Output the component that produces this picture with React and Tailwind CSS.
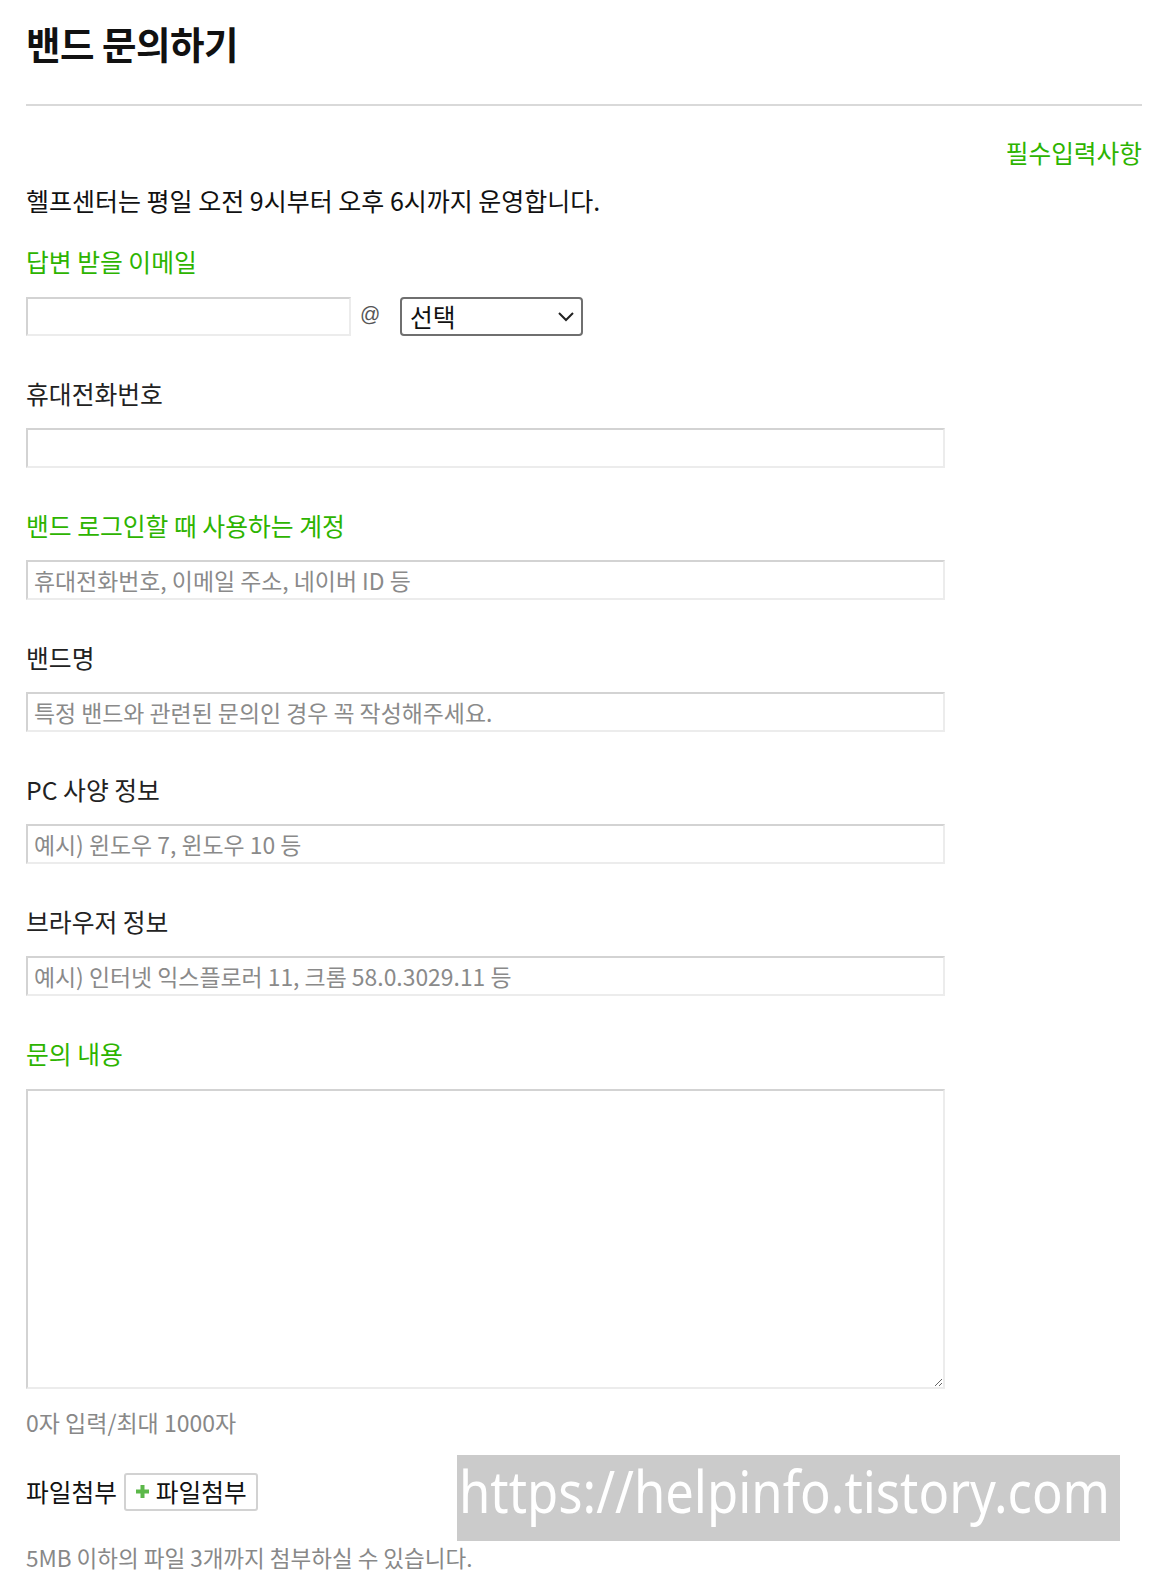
import React from 'react';

const font = { fontFamily: '"Noto Sans CJK KR", "Noto Sans", sans-serif' };

function Label({ green, children }) {
    return (
        <div className={`mt-[42px] h-[30px] leading-[30px] text-[24.8px] ${green ? 'text-[#2db400]' : 'text-[#222]'}`}>
            {children}
        </div>
    );
}

function TextInput({ placeholder }) {
    return (
        <input
            type="text"
            placeholder={placeholder}
            className="mt-[20.5px] block h-[39.5px] w-[919px] border-2 border-t-[#d3d3d3] border-l-[#d3d3d3] border-b-[#ececec] border-r-[#ececec] bg-white px-[6px] text-[22.9px] text-[#222] placeholder:text-[#8a8a8a] outline-none"
            style={font}
        />
    );
}

export default function App() {
    return (
        <div className="relative h-[1582px] overflow-hidden bg-white pl-[26px] pr-[18px]" style={font}>
            {/* Title */}
            <h1 className="h-[85px] leading-[85px] text-[37.5px] font-bold text-[#111] tracking-[-0.5px]">
                밴드 문의하기
            </h1>
            <div className="mt-[19px] h-[2px] bg-[#d9d9d9]" />

            <div className="mt-[31px] h-[30px] leading-[30px] text-right text-[24.7px] text-[#2db400]">
                필수입력사항
            </div>
            <p className="mt-[18px] h-[30px] leading-[30px] text-[25px] text-[#111]">
                헬프센터는 평일 오전 9시부터 오후 6시까지 운영합니다.
            </p>

            {/* Email */}
            <div className="mt-[31px] h-[30px] leading-[30px] text-[24.8px] text-[#2db400]">답변 받을 이메일</div>
            <div className="mt-[21px] flex items-center">
                <input
                    type="text"
                    className="block h-[38.5px] w-[325px] border-2 border-t-[#d3d3d3] border-l-[#d3d3d3] border-b-[#ececec] border-r-[#ececec] bg-white outline-none"
                />
                <span className="ml-[9px] w-[19px] text-center text-[20px] text-[#555] -mt-[4px]" style={{ fontFamily: '"Liberation Sans", sans-serif' }}>@</span>
                <div className="ml-[21px] flex h-[38.5px] w-[183px] items-center justify-between rounded-[4px] border-2 border-[#6f6f6f] pl-[8px] pr-[6px]">
                    <span className="text-[24.8px] text-[#111]">선택</span>
                    <svg width="18" height="12" viewBox="0 0 18 12" fill="none" stroke="#222" strokeWidth="2">
                        <path d="M2 3l7 7 7-7" />
                    </svg>
                </div>
            </div>

            <Label>휴대전화번호</Label>
            <TextInput />

            <Label green>밴드 로그인할 때 사용하는 계정</Label>
            <TextInput placeholder="휴대전화번호, 이메일 주소, 네이버 ID 등" />

            <Label>밴드명</Label>
            <TextInput placeholder="특정 밴드와 관련된 문의인 경우 꼭 작성해주세요." />

            <Label>PC 사양 정보</Label>
            <TextInput placeholder="예시) 윈도우 7, 윈도우 10 등" />

            <Label>브라우저 정보</Label>
            <TextInput placeholder="예시) 인터넷 익스플로러 11, 크롬 58.0.3029.11 등" />

            <Label green>문의 내용</Label>
            <textarea
                className="mt-[21px] block h-[300px] w-[919px] border-2 border-t-[#d3d3d3] border-l-[#d3d3d3] border-b-[#ececec] border-r-[#ececec] bg-white outline-none"
            />

            <div className="mt-[18px] h-[30px] leading-[30px] text-[23px] text-[#888]">0자 입력/최대 1000자</div>

            {/* File attach */}
            <div className="mt-[36px] flex h-[38.5px] items-center">
                <span className="text-[24.7px] text-[#111]">파일첨부</span>
                <button className="ml-[7px] flex h-[38.5px] items-center gap-[7px] rounded-[3px] border-2 border-[#d2d2d2] bg-white pl-[10px] pr-[9px]">
                    <svg width="13" height="13" viewBox="0 0 13 13">
                        <path d="M4.5 0h4v4.5H13v4H8.5V13h-4V8.5H0v-4h4.5z" fill="#5cb84a" />
                    </svg>
                    <span className="text-[24.7px] text-[#111]">파일첨부</span>
                </button>
            </div>

            <div className="mt-[31px] h-[30px] leading-[30px] text-[22.5px] text-[#888]">
                5MB 이하의 파일 3개까지 첨부하실 수 있습니다.
            </div>

            {/* Watermark overlay */}
            <div className="absolute left-[457px] top-[1455px] flex h-[86px] w-[663px] items-center bg-[#cbcbcb] pl-[2px]">
                <span
                    className="mb-[14px] origin-left scale-x-[0.875] whitespace-nowrap text-[58px] leading-none text-white"
                    style={{ fontFamily: '"Noto Sans", "Open Sans", sans-serif' }}
                >
                    https://helpinfo.tistory.com
                </span>
            </div>
        </div>
    );
}
